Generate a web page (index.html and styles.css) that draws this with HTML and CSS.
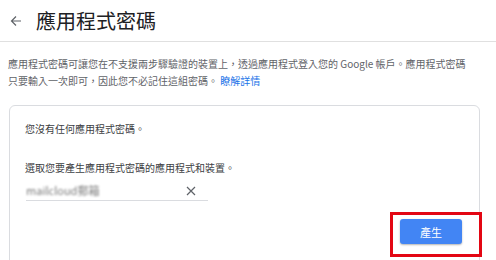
FILE: index.html
```html
<!DOCTYPE html>
<html lang="zh-Hant">
<head>
  <meta charset="UTF-8">
  <title>應用程式密碼</title>
  <link rel="stylesheet" href="styles.css">
</head>
<body>
  <header class="top-bar">
    <a href="#" class="back-btn" aria-label="返回">
      <svg width="12" height="12" viewBox="0 0 12 12"><path d="M11 6H1.5M6 1.5L1.5 6 6 10.5" fill="none" stroke="#5f6368" stroke-width="1.2"/></svg>
    </a>
    <h1 class="title">應用程式密碼</h1>
  </header>

  <p class="intro">應用程式密碼可讓您在不支援兩步驟驗證的裝置上，透過應用程式登入您的 Google 帳戶。應用程式密碼只要輸入一次即可，因此您不必記住這組密碼。 <a href="#" class="link">瞭解詳情</a></p>

  <div class="card">
    <p class="card-text">您沒有任何應用程式密碼。</p>
    <p class="card-text second">選取您要產生應用程式密碼的應用程式和裝置。</p>
    <div class="field">
      <span class="field-value">mailcloud郵箱</span>
      <svg class="clear" width="10" height="10" viewBox="0 0 10 10"><path d="M1 1L9 9M9 1L1 9" stroke="#5f6368" stroke-width="1.2"/></svg>
    </div>
    <div class="actions">
      <div class="mark-wrap">
        <button class="gen-btn">產生</button>
        <span class="mark"></span>
      </div>
    </div>
  </div>
</body>
</html>
```

FILE: styles.css
```css
body {
  margin: 0;
  font-family: "Noto Sans CJK TC", Roboto, "Liberation Sans", sans-serif;
  background: #fff;
  color: #202124;
}
.top-bar {
  display: flex;
  align-items: center;
  height: 41px;
  padding-left: 10px;
  border-bottom: 1px solid #e0e0e0;
}
.back-btn {
  display: flex;
  width: 12px;
  height: 12px;
}
.title {
  margin: 0 0 0 14px;
  font-size: 20px;
  font-weight: 400;
  line-height: 24px;
  color: #202124;
}
.intro {
  max-width: 462px;
  margin: 13px 0 0 8px;
  font-size: 10px;
  line-height: 17px;
  color: #5f6368;
}
.link {
  color: #1a73e8;
  text-decoration: none;
}
.card {
  margin: 16px 16px 0 9px;
  padding: 14px 15px 30px;
  border: 1px solid #dadce0;
  border-radius: 6px;
}
.card-text {
  margin: 0;
  font-size: 10px;
  line-height: 17px;
  color: #3c4043;
}
.card-text.second {
  margin-top: 22px;
}
.field {
  display: flex;
  align-items: center;
  width: 182px;
  margin: 0 0 0 1px;
  padding-top: 6px;
  padding-bottom: 1px;
  border-bottom: 1px solid #dadce0;
}
.field-value {
  font-size: 11px;
  line-height: 17px;
  color: #7a7a7a;
  filter: blur(1.3px);
}
.clear {
  margin-left: auto;
  margin-right: 12px;
}
.actions {
  display: flex;
  justify-content: flex-end;
  margin-top: 18px;
  padding-right: 2px;
}
.mark-wrap {
  position: relative;
  display: flex;
}
.gen-btn {
  width: 62px;
  height: 25px;
  border: none;
  border-radius: 3px;
  background: #4285f4;
  color: #fff;
  font-family: inherit;
  font-size: 11px;
  box-shadow: 0 1px 2px rgba(0,0,0,0.3);
}
.mark {
  position: absolute;
  top: -7px;
  left: -10px;
  right: -20px;
  bottom: -13px;
  border: 3px solid #e30613;
}
```
